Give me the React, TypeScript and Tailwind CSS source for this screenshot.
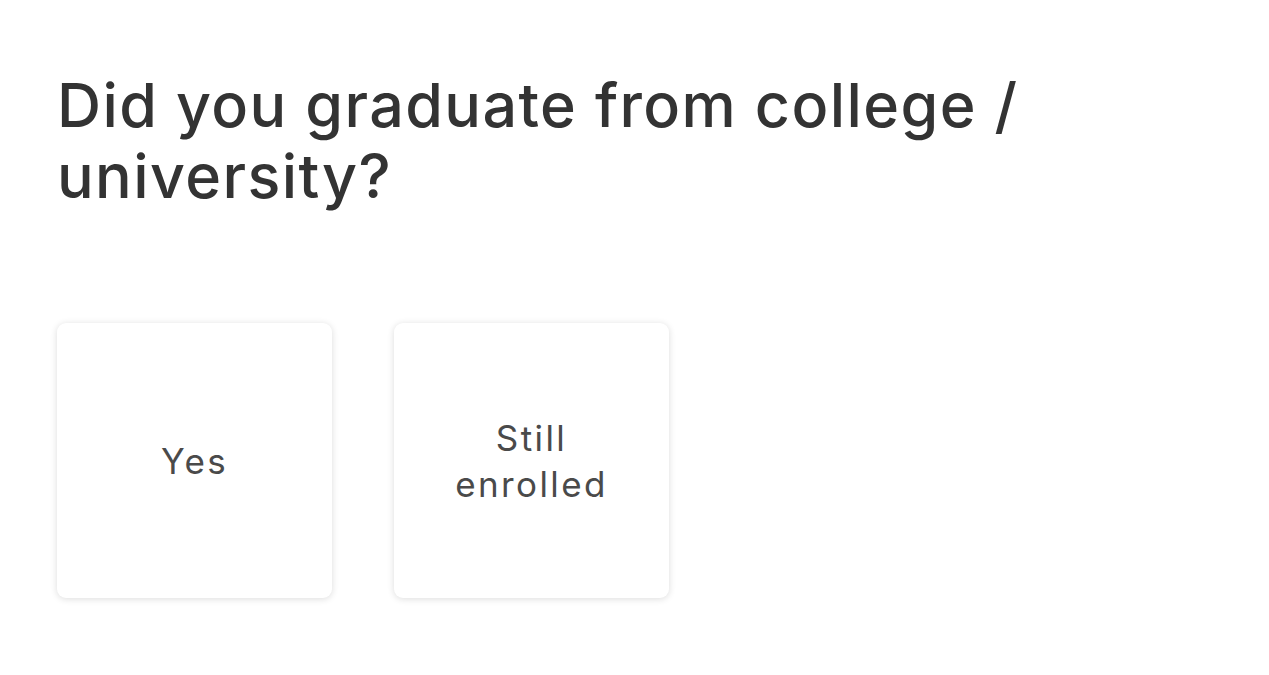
export default function App() {
  const options = [["Yes"], ["Still", "enrolled"]];
  return (
    <div
      className="min-h-[675px] bg-white pl-[57px] pt-[70px]"
      style={{ fontFamily: "Inter, 'Noto Sans', sans-serif" }}
    >
      <h1 className="text-[61px] leading-[71px] font-medium tracking-[1.4px] text-[#333333]">
        Did you graduate from college /
        <br />
        university?
      </h1>
      <div className="mt-[111px] flex gap-[62px]">
        {options.map((lines) => (
          <button
            key={lines.join(" ")}
            className="flex h-[275px] w-[275px] flex-col items-center justify-center rounded-[9px] bg-white text-[35px] leading-[46px] tracking-[2.4px] text-[#4a4a4a] shadow-[0_1px_7px_rgba(0,0,0,0.14)]"
          >
            {lines.map((l) => (
              <span key={l}>{l}</span>
            ))}
          </button>
        ))}
      </div>
    </div>
  );
}
